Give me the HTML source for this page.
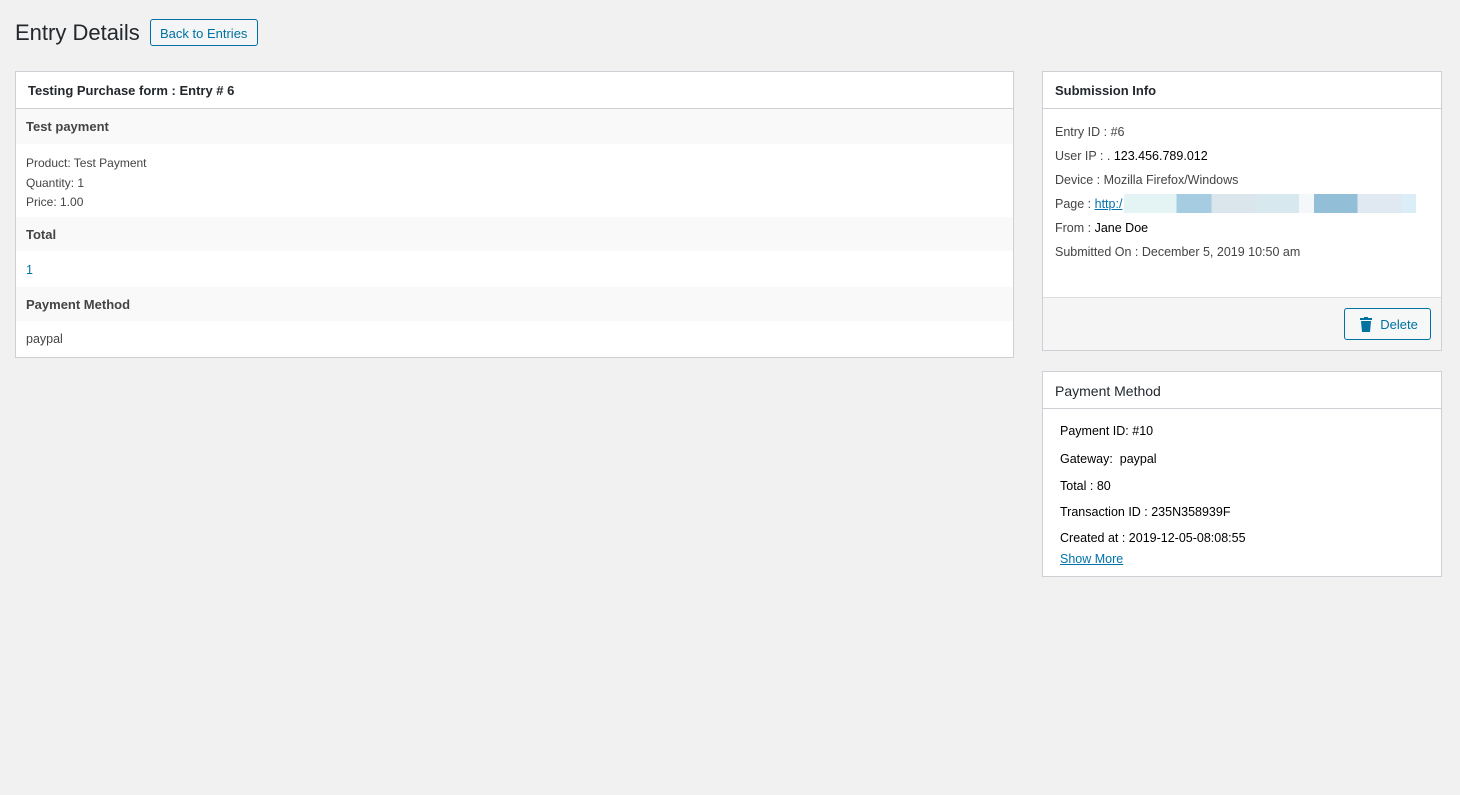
<!DOCTYPE html>
<html><head><style>
body{margin:0;background:#f1f1f1;font-family:"Liberation Sans",sans-serif;color:#444;width:1460px;height:795px;position:relative;overflow:hidden}
.a{position:absolute}
h1{position:absolute;left:15px;top:20px;margin:0;font-size:22px;font-weight:400;color:#23282d}
.btn{position:absolute;border:1px solid #0071a1;color:#0071a1;border-radius:3px;background:#f3f5f6;font-size:13px;box-sizing:border-box}
.box{position:absolute;background:#fff;border:1px solid #ccd0d4;box-sizing:border-box}
.hd{height:37px;border-bottom:1px solid #ccd0d4;box-sizing:border-box;font-size:13px;font-weight:bold;color:#23282d;padding:11px 12px}
.row{position:absolute;left:0;right:0;background:#f9f9f9;font-size:13px;font-weight:bold;padding-left:10px;box-sizing:border-box}
.t{position:absolute;font-size:12.5px;white-space:nowrap}
</style></head><body>
<h1>Entry Details</h1>
<div class="btn" style="left:150px;top:19px;width:108px;height:27px;padding:6px 0 0 9px">Back to Entries</div>

<div class="box" style="left:15px;top:71px;width:999px;height:287px">
<div class="hd">Testing Purchase form : Entry # 6</div>
<div class="row" style="top:37px;height:35px;line-height:35px">Test payment</div>
<div class="t" style="left:10px;top:82px;line-height:19.5px;font-size:12px">Product: Test Payment<br>Quantity: 1<br>Price: 1.00</div>
<div class="row" style="top:145px;height:34px;line-height:36px">Total</div>
<div class="t" style="left:10px;top:191px;color:#0073aa">1</div>
<div class="row" style="top:215px;height:34px;line-height:36px">Payment Method</div>
<div class="t" style="left:10px;top:260px">paypal</div>
</div>

<div class="box" style="left:1042px;top:71px;width:400px;height:280px">
<div class="hd">Submission Info</div>
<div class="t" style="left:12px;top:53px">Entry ID : #6</div>
<div class="t" style="left:12px;top:77px">User IP : . <span style="color:#000">123.456.789.012</span></div>
<div class="t" style="left:12px;top:101px">Device : Mozilla Firefox/Windows</div>
<div class="t" style="left:12px;top:125px">Page : <span style="color:#0073aa;text-decoration:underline">http:/</span></div>
<div class="a" style="left:81px;top:122px;width:292px;height:19px;background:linear-gradient(90deg,#e4f3f4 0 18%,#a5cce0 18% 30%,#dbe6ec 30% 45%,#d8e8ef 45% 60%,#f5f8fa 60% 65%,#93bed8 65% 80%,#e0e8f2 80% 95%,#dbeef7 95%)"></div>
<div class="t" style="left:12px;top:149px">From : <span style="color:#000">Jane Doe</span></div>
<div class="t" style="left:12px;top:173px">Submitted On : December 5, 2019 10:50 am</div>
<div class="a" style="left:0;right:0;top:225px;bottom:0;background:#f5f5f5;border-top:1px solid #ddd"></div>
<div class="btn" style="left:301px;top:236px;width:87px;height:32px;padding:7px 0 0 14px;background:#f6f7f7">
<svg width="14" height="16" viewBox="0 0 14 16" style="vertical-align:-3px"><path d="M1 2h4V1h4v1h4v2H1z M2 5h10l-1 11H3z" fill="#0071a1"/></svg>&nbsp; Delete</div>
</div>

<div class="box" style="left:1042px;top:371px;width:400px;height:206px">
<div class="hd" style="font-weight:400;font-size:14px;color:#23282d">Payment Method</div>
<div class="t" style="left:17px;top:52px;color:#000">Payment ID: #10</div>
<div class="t" style="left:17px;top:80px;color:#000">Gateway:&nbsp; paypal</div>
<div class="t" style="left:17px;top:107px;color:#000">Total : 80</div>
<div class="t" style="left:17px;top:133px;color:#000">Transaction ID : 235N358939F</div>
<div class="t" style="left:17px;top:159px;color:#000">Created at : 2019-12-05-08:08:55</div>
<div class="t" style="left:17px;top:180px;color:#0073aa;text-decoration:underline">Show More</div>
</div>
</body></html>
